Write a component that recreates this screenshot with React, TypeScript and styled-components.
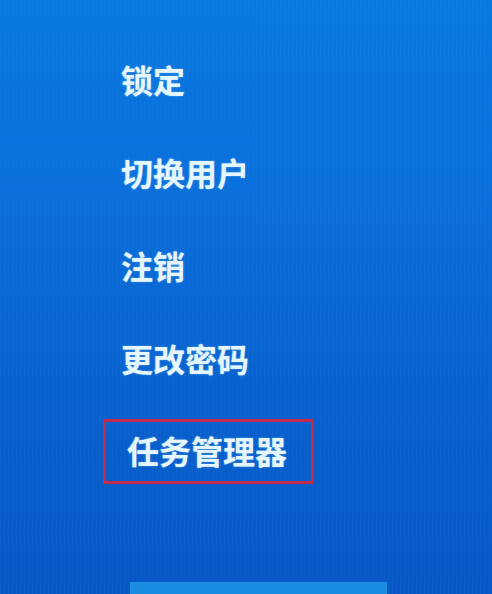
import React from 'react';
import styled, { createGlobalStyle } from 'styled-components';

const GlobalStyle = createGlobalStyle`
	html, body {
		margin: 0;
		padding: 0;
		width: 100%;
		height: 100%;
		overflow: hidden;
	}
	#root {
		height: 100%;
	}
`

const items = ["锁定", "切换用户", "注销", "更改密码", "任务管理器"];

export default function App() {
	return (
		<>
			<GlobalStyle />
			<Screen>
				<Menu>
					{items.map((label, i) => (
						<MenuItem key={label}>
							<ItemLabel highlighted={i === items.length - 1}>
								{label}
							</ItemLabel>
						</MenuItem>
					))}
				</Menu>
				<CancelButton />
			</Screen>
		</>
	);
}

const Screen = styled.div`
	display: flex;
	flex-direction: column;
	height: 100%;
	box-sizing: border-box;
	background:
		repeating-linear-gradient(90deg, rgba(255, 255, 255, 0.02) 0px, rgba(255, 255, 255, 0.02) 1px, rgba(0, 0, 0, 0) 1px, rgba(0, 0, 0, 0) 4px),
		linear-gradient(180deg, #0878e0 0%, #0a70dc 30%, #0862cf 65%, #0758c6 100%);
	font-family: "Noto Sans CJK SC", "Noto Sans", sans-serif;
`

const Menu = styled.div`
	display: flex;
	flex-direction: column;
	padding: 33px 0 0 121px;
`

const MenuItem = styled.div`
	display: flex;
	align-items: center;
	height: 93px;
`

const ItemLabel = styled.span<{ highlighted?: boolean }>`
	display: inline-block;
	color: #e6f6ff;
	font-size: 32px;
	font-weight: 700;
	line-height: 1.3;
	text-shadow: 0 0 2px rgba(200, 240, 255, 0.5);
	${props => props.highlighted && `
		margin-left: -18px;
		padding: 8px 24px 10px 21px;
		border: 3px solid #c42a4c;
		border-radius: 1px;
	`}
`

const CancelButton = styled.div`
	margin: auto 0 0 130px;
	width: 257px;
	height: 12px;
	background: #1a8de2;
`
